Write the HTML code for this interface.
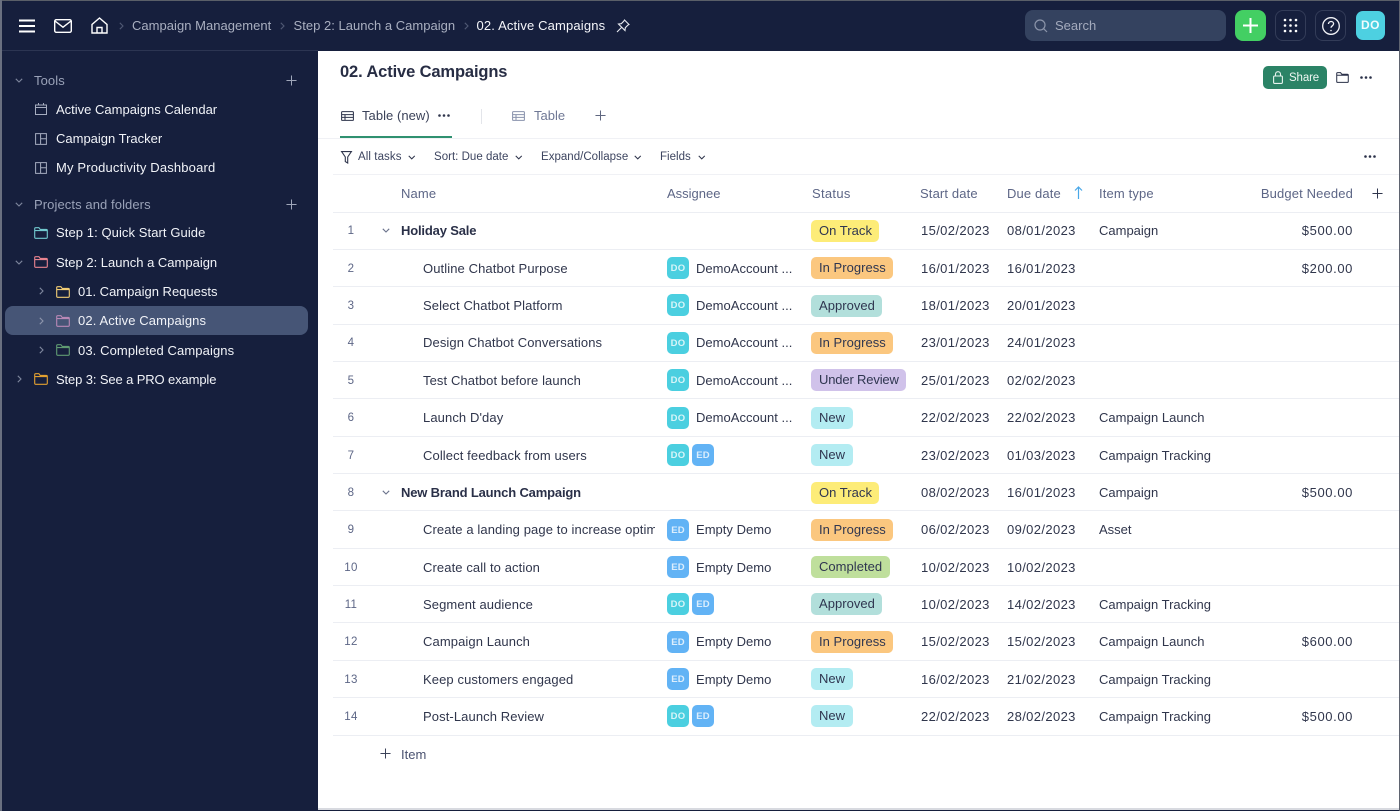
<!DOCTYPE html>
<html lang="en">
<head>
<meta charset="utf-8">
<title>02. Active Campaigns</title>
<style>
html,body{margin:0;padding:0;width:1400px;height:811px;overflow:hidden;background:#161f3d}
body{font-family:"Liberation Sans",sans-serif;font-size:13px;letter-spacing:.03px;color:#2a3048;position:relative}
*{box-sizing:border-box}
.a{position:absolute;white-space:nowrap}
svg.a{overflow:visible;fill:none;stroke:currentColor;stroke-width:1.2}
#edgeT{left:0;top:0;width:1400px;height:1px;background:#5a5f68}
#edgeL{left:0;top:0;width:1.5px;height:811px;background:#6a7080}
#edgeR{left:1398.5px;top:0;width:1.5px;height:811px;background:#5f6470}
#main{left:318px;top:51px;width:1081px;height:757px;background:#fff}
#edgeB{left:318px;top:808px;width:1081px;height:2px;background:#d8dae0}
.crumb{top:18px;color:#a9afc0;line-height:16px}
.side{color:#f1f3f8;line-height:16px;margin-top:1px;letter-spacing:0}
.sh{color:#9aa2b8;line-height:16px;margin-top:1px;letter-spacing:.09px}
.hd{color:#5d6686;line-height:16px;top:186px;letter-spacing:.14px}
.tb{color:#3d4560;font-size:11.5px;line-height:14px;top:150px;letter-spacing:.02px}
.line{left:333px;width:1066px;height:1px;background:#eceef3}
.n{left:333px;width:36px;text-align:center;color:#5d6686;font-size:11.5px;line-height:16px;margin-top:1px;letter-spacing:.3px}
.t{left:423px;line-height:16px;color:#30364c;margin-top:1px;letter-spacing:.1px}
.b{left:401px;font-weight:700;line-height:16px;color:#2a3048;margin-top:1px;letter-spacing:-.17px}
.as{left:696px;line-height:16px;color:#30364c;margin-top:1px;letter-spacing:.02px}
.d1{left:921px;line-height:16px;color:#30364c;margin-top:1px;letter-spacing:.37px}
.d2{left:1007px;line-height:16px;color:#30364c;margin-top:1px;letter-spacing:.37px}
.ty{left:1099px;line-height:16px;color:#30364c;margin-top:1px;letter-spacing:0}
.bu{right:47px;line-height:16px;color:#30364c;margin-top:1px;letter-spacing:.6px}
.st{left:811px;height:22px;line-height:22px;padding:0 7.5px 0 8px;border-radius:5px;color:#2f3650;letter-spacing:.03px}
.ot{background:#fdec78}.ip{background:#fbc77f}.ap{background:#b2dfdb}.ur{background:#d0c2ea;letter-spacing:-.16px}.nw{background:#b3ecf2}.co{background:#bfdf9c}
.av{width:22px;height:22px;border-radius:5px;color:rgba(255,255,255,.78);font-size:9.5px;font-weight:700;line-height:23px;text-align:center;letter-spacing:.2px}
.do{left:667px;background:#4bcfe0}.ed{left:667px;background:#62b3f5}.ed2{left:692px;background:#62b3f5}
</style>
</head>
<body>
<svg width="0" height="0" style="position:absolute">
<symbol id="folder" viewBox="0 0 14 12"><path d="M.7 10.300V1.700c0-.6.400-1 1-1h3.200l1.300 1.700h6.100c.6 0 1 .4 1 1v6.900c0 .6-.4 1-1 1H1.700c-.6 0-1-.4-1-1zM.7 3.600h12.600" fill="none" stroke="currentColor" stroke-width="1.100"/></symbol>
<symbol id="split" viewBox="0 0 12 12"><path d="M.6.6h10.800v10.800H.6zM5.600.6v10.800M5.600 5.800h5.800" fill="none" stroke="currentColor" stroke-width="1"/></symbol>
<symbol id="grid" viewBox="0 0 13 10"><path d="M.6 1.400c0-.5.3-.8.8-.8h10.200c.5 0 .8.3.8.8v7.200c0 .5-.3.8-.8.8H1.400c-.5 0-.8-.3-.8-.8zM.6 3.600h11.800M.6 6.400h11.800M4 3.600v5.800" fill="none" stroke="currentColor" stroke-width="1.050"/></symbol>
<symbol id="plus" viewBox="0 0 12 12"><path d="M6 .5v11M.5 6h11" fill="none" stroke="currentColor" stroke-width="1.100"/></symbol>
<symbol id="down" viewBox="0 0 8 5"><path d="M.8.8 4 4 7.200.8" fill="none" stroke="currentColor" stroke-width="1.100"/></symbol>
<symbol id="right" viewBox="0 0 5 8"><path d="M.8.8 4 4 .8 7.200" fill="none" stroke="currentColor" stroke-width="1.100"/></symbol>
<symbol id="more" viewBox="0 0 12 3"><circle cx="1.500" cy="1.500" r="1.300" fill="currentColor" stroke="none"/><circle cx="6" cy="1.500" r="1.300" fill="currentColor" stroke="none"/><circle cx="10.500" cy="1.500" r="1.300" fill="currentColor" stroke="none"/></symbol>
</svg>

<div class="a" id="main"></div>
<div class="a" id="edgeB"></div>
<div class="a" style="left:0;top:50px;width:318px;height:1px;background:#2c3552"></div>

<!-- top bar -->
<svg class="a" style="left:19px;top:19px;color:#fff;stroke-width:2" width="16" height="14"><path d="M0 1.500h16M0 7h16M0 12.500h16"/></svg>
<svg class="a" style="left:53.500px;top:18.500px;color:#fff;stroke-width:1.400" width="18" height="14"><rect x=".7" y=".7" width="16.600" height="12.600" rx="1.600"/><path d="m1 2 8 6.200L17 2"/></svg>
<svg class="a" style="left:91px;top:17px;color:#fff;stroke-width:1.400" width="17" height="17"><path d="M1 16V7.500L8.500 1 16 7.500V16zM6 16v-5.500h5V16"/></svg>
<svg class="a" style="left:119px;top:22px;color:#4f5873;width:5px;height:8px"><use href="#right"/></svg>
<div class="a crumb" style="left:132px">Campaign Management</div>
<svg class="a" style="left:280px;top:22px;color:#4f5873;width:5px;height:8px"><use href="#right"/></svg>
<div class="a crumb" style="left:293.500px;letter-spacing:.02px">Step 2: Launch a Campaign</div>
<svg class="a" style="left:464px;top:22px;color:#4f5873;width:5px;height:8px"><use href="#right"/></svg>
<div class="a crumb" style="left:476.500px;color:#f5f6fa;letter-spacing:.15px">02. Active Campaigns</div>
<svg class="a" style="left:616px;top:19px;color:#e8eaf0;stroke-width:1.100" width="14" height="14"><path d="M8.500 1 13 5.500 11.800 6.200 9.300 8.700 9 11.500 2.500 5 5.300 4.700 7.800 2.200zM5.500 8.500 1 13"/></svg>

<div class="a" style="left:1025px;top:10px;width:201px;height:31px;background:#34425f;border-radius:8px"></div>
<svg class="a" style="left:1034px;top:19px;color:#8c95aa;stroke-width:1.200" width="14" height="14"><circle cx="6" cy="6" r="5"/><path d="m9.700 9.700 3.300 3.300"/></svg>
<div class="a" style="left:1055px;top:18px;line-height:16px;color:#a4abbd;letter-spacing:0">Search</div>
<div class="a" style="left:1235px;top:10px;width:31px;height:31px;border-radius:8px;background:#43cf63"></div>
<svg class="a" style="left:1243px;top:18px;color:#fff;stroke-width:2" width="15" height="15"><path d="M7.500 0v15M0 7.500h15"/></svg>
<div class="a" style="left:1275px;top:10px;width:31px;height:31px;border-radius:8px;border:1px solid #333c58"></div>
<svg class="a" style="left:1283px;top:18px;color:#fff" width="15" height="15"><g fill="#fff" stroke="none"><circle cx="2" cy="2" r="1.300"/><circle cx="7.500" cy="2" r="1.300"/><circle cx="13" cy="2" r="1.300"/><circle cx="2" cy="7.500" r="1.300"/><circle cx="7.500" cy="7.500" r="1.300"/><circle cx="13" cy="7.500" r="1.300"/><circle cx="2" cy="13" r="1.300"/><circle cx="7.500" cy="13" r="1.300"/><circle cx="13" cy="13" r="1.300"/></g></svg>
<div class="a" style="left:1315px;top:10px;width:31px;height:31px;border-radius:8px;border:1px solid #333c58"></div>
<svg class="a" style="left:1321.500px;top:16.500px;color:#f2f3f7;stroke-width:1.300" width="18" height="18"><circle cx="9" cy="9" r="8.300"/><path d="M6.500 7c0-1.500 1.100-2.500 2.600-2.500s2.500 1 2.500 2.300c0 2-2.600 2-2.600 4"/><circle cx="9" cy="13.500" r=".8" fill="#f2f3f7" stroke="none"/></svg>
<div class="a" style="left:1356px;top:11px;width:29px;height:29px;border-radius:7px;background:#4dd0e1;color:rgba(255,255,255,.92);font-weight:700;font-size:12px;line-height:29px;text-align:center;letter-spacing:.5px">DO</div>

<!-- sidebar -->
<svg class="a" style="left:15px;top:78px;width:8px;height:5px;color:#7d859c"><use href="#down"/></svg>
<div class="a sh" style="left:34px;top:72px">Tools</div>
<svg class="a" style="left:285.500px;top:74.500px;width:11px;height:11px;color:#a0a7ba"><use href="#plus"/></svg>
<svg class="a" style="left:35px;top:103px;color:#a6adc0;stroke-width:1" width="12" height="12"><path d="M.5 2h11v9.500H.5zM.5 4.500h11M3.500 0v2M8.500 0v2"/></svg>
<div class="a side" style="left:56px;top:101px">Active Campaigns Calendar</div>
<svg class="a" style="left:34.500px;top:133px;width:12px;height:12px;color:#a6adc0"><use href="#split"/></svg>
<div class="a side" style="left:56px;top:130px">Campaign Tracker</div>
<svg class="a" style="left:34.500px;top:162px;width:12px;height:12px;color:#a6adc0"><use href="#split"/></svg>
<div class="a side" style="left:56px;top:159px;letter-spacing:.16px">My Productivity Dashboard</div>

<svg class="a" style="left:15px;top:202px;width:8px;height:5px;color:#7d859c"><use href="#down"/></svg>
<div class="a sh" style="left:34px;top:196px">Projects and folders</div>
<svg class="a" style="left:285.500px;top:198.500px;width:11px;height:11px;color:#a0a7ba"><use href="#plus"/></svg>
<svg class="a" style="left:34px;top:227px;width:14px;height:12px;color:#72c9cf"><use href="#folder"/></svg>
<div class="a side" style="left:56px;top:224px;letter-spacing:.08px">Step 1: Quick Start Guide</div>
<svg class="a" style="left:15px;top:260px;width:8px;height:5px;color:#7d859c"><use href="#down"/></svg>
<svg class="a" style="left:34px;top:256px;width:14px;height:12px;color:#e8838f"><use href="#folder"/></svg>
<div class="a side" style="left:56px;top:253.500px">Step 2: Launch a Campaign</div>
<svg class="a" style="left:39px;top:287px;width:5px;height:8px;color:#7d859c"><use href="#right"/></svg>
<svg class="a" style="left:56px;top:285.500px;width:14px;height:12px;color:#f2cd74"><use href="#folder"/></svg>
<div class="a side" style="left:78px;top:283px">01. Campaign Requests</div>
<div class="a" style="left:4.500px;top:306px;width:303.500px;height:29px;border-radius:8px;background:#465576"></div>
<svg class="a" style="left:39px;top:316.500px;width:5px;height:8px;color:#8d95ab"><use href="#right"/></svg>
<svg class="a" style="left:56px;top:315px;width:14px;height:12px;color:#b888b6"><use href="#folder"/></svg>
<div class="a side" style="left:78px;top:312px;letter-spacing:.12px">02. Active Campaigns</div>
<svg class="a" style="left:39px;top:346px;width:5px;height:8px;color:#7d859c"><use href="#right"/></svg>
<svg class="a" style="left:56px;top:344px;width:14px;height:12px;color:#5f9a72"><use href="#folder"/></svg>
<div class="a side" style="left:78px;top:342px;letter-spacing:.1px">03. Completed Campaigns</div>
<svg class="a" style="left:17px;top:375px;width:5px;height:8px;color:#7d859c"><use href="#right"/></svg>
<svg class="a" style="left:34px;top:373px;width:14px;height:12px;color:#e2a030"><use href="#folder"/></svg>
<div class="a side" style="left:56px;top:371px;letter-spacing:-.12px">Step 3: See a PRO example</div>

<!-- page header -->
<div class="a" style="left:340px;top:61px;font-size:16.500px;font-weight:700;line-height:22px;color:#272d44;letter-spacing:-.13px">02. Active Campaigns</div>
<div class="a" style="left:1263px;top:66px;width:64px;height:23px;border-radius:5px;background:#2b8366"></div>
<svg class="a" style="left:1273px;top:71px;color:#e6f3ee;stroke-width:1.100" width="10" height="13"><rect x=".6" y="5" width="8.800" height="7.400" rx="1"/><path d="M2.500 5V3.200a2.500 2.500 0 0 1 5 0V5"/></svg>
<div class="a" style="left:1289px;top:70.500px;font-size:11.500px;line-height:15px;color:#eef7f3;letter-spacing:-.12px">Share</div>
<svg class="a" style="left:1336px;top:72px;width:13px;height:11px;color:#2a3048"><use href="#folder"/></svg>
<svg class="a" style="left:1360px;top:76px;width:12px;height:3px;color:#2a3048"><use href="#more"/></svg>

<!-- tabs -->
<svg class="a" style="left:341px;top:111px;width:13px;height:10px;color:#2f354c"><use href="#grid"/></svg>
<div class="a" style="left:362px;top:108px;line-height:16px;color:#3b4259;letter-spacing:.05px">Table (new)</div>
<svg class="a" style="left:438px;top:114px;width:12px;height:3px;color:#2f354c"><use href="#more"/></svg>
<div class="a" style="left:481px;top:109px;width:1px;height:15px;background:#e3e5ea"></div>
<svg class="a" style="left:512px;top:111px;width:13px;height:10px;color:#8a93ad"><use href="#grid"/></svg>
<div class="a" style="left:534px;top:108px;line-height:16px;color:#6f7895;letter-spacing:0">Table</div>
<svg class="a" style="left:595px;top:110px;width:11px;height:11px;color:#5f6780"><use href="#plus"/></svg>
<div class="a" style="left:340px;top:136px;width:112px;height:2px;background:#2f9170"></div>
<div class="a" style="left:318px;top:138px;width:1081px;height:1px;background:#f0f1f5"></div>

<!-- toolbar -->
<svg class="a" style="left:341px;top:150.500px;color:#2f354c;stroke-width:1.100" width="11" height="13"><path d="M.6.6h9.800L6.700 6v6L4.300 10.600V6z"/></svg>
<div class="a tb" style="left:358px;letter-spacing:.08px">All tasks</div>
<svg class="a" style="left:408px;top:154.500px;width:7.500px;height:5px;color:#2f354c"><use href="#down"/></svg>
<div class="a tb" style="left:434px">Sort: Due date</div>
<svg class="a" style="left:515px;top:154.500px;width:7.500px;height:5px;color:#2f354c"><use href="#down"/></svg>
<div class="a tb" style="left:541px">Expand/Collapse</div>
<svg class="a" style="left:634px;top:154.500px;width:7.500px;height:5px;color:#2f354c"><use href="#down"/></svg>
<div class="a tb" style="left:660px">Fields</div>
<svg class="a" style="left:697.500px;top:154.500px;width:7.500px;height:5px;color:#2f354c"><use href="#down"/></svg>
<svg class="a" style="left:1364px;top:155px;width:12px;height:3px;color:#2a3048"><use href="#more"/></svg>
<div class="a" style="left:333px;top:174px;width:1066px;height:1px;background:#f0f1f5"></div>

<!-- table header -->
<div class="a hd" style="left:401px">Name</div>
<div class="a hd" style="left:667px;letter-spacing:0">Assignee</div>
<div class="a hd" style="left:812px;letter-spacing:.3px">Status</div>
<div class="a hd" style="left:920px">Start date</div>
<div class="a hd" style="left:1007px">Due date</div>
<svg class="a" style="left:1074px;top:186px;color:#4aa8e8;stroke-width:1.200" width="9" height="13"><path d="M4.500 13V1M1 4.500 4.500 1 8 4.500"/></svg>
<div class="a hd" style="left:1099px">Item type</div>
<div class="a hd" style="right:47px">Budget Needed</div>
<svg class="a" style="left:1372px;top:188px;width:11px;height:11px;color:#2f354c"><use href="#plus"/></svg>

<!-- row separators -->
<div class="a line" style="top:212px"></div>
<div class="a line" style="top:249px"></div>
<div class="a line" style="top:286px"></div>
<div class="a line" style="top:324px"></div>
<div class="a line" style="top:361px"></div>
<div class="a line" style="top:398px"></div>
<div class="a line" style="top:436px"></div>
<div class="a line" style="top:473px"></div>
<div class="a line" style="top:510px"></div>
<div class="a line" style="top:548px"></div>
<div class="a line" style="top:585px"></div>
<div class="a line" style="top:622px"></div>
<div class="a line" style="top:660px"></div>
<div class="a line" style="top:697px"></div>
<div class="a line" style="top:735px"></div>

<!-- rows -->
<div class="a n" style="top:222px">1</div>
<svg class="a" style="left:382px;top:228px;width:8px;height:5px;color:#6b738c"><use href="#down"/></svg>
<div class="a b" style="top:222px">Holiday Sale</div>
<div class="a st ot" style="top:219.500px">On Track</div>
<div class="a d1" style="top:222px">15/02/2023</div><div class="a d2" style="top:222px">08/01/2023</div>
<div class="a ty" style="top:222px">Campaign</div><div class="a bu" style="top:222px">$500.00</div>

<div class="a n" style="top:259.500px">2</div>
<div class="a t" style="top:259.500px">Outline Chatbot Purpose</div>
<div class="a av do" style="top:257px">DO</div><div class="a as" style="top:259.500px">DemoAccount ...</div>
<div class="a st ip" style="top:257px">In Progress</div>
<div class="a d1" style="top:259.500px">16/01/2023</div><div class="a d2" style="top:259.500px">16/01/2023</div>
<div class="a bu" style="top:259.500px">$200.00</div>

<div class="a n" style="top:297px">3</div>
<div class="a t" style="top:297px">Select Chatbot Platform</div>
<div class="a av do" style="top:294px">DO</div><div class="a as" style="top:297px">DemoAccount ...</div>
<div class="a st ap" style="top:294.500px">Approved</div>
<div class="a d1" style="top:297px">18/01/2023</div><div class="a d2" style="top:297px">20/01/2023</div>

<div class="a n" style="top:334px">4</div>
<div class="a t" style="top:334px">Design Chatbot Conversations</div>
<div class="a av do" style="top:331.500px">DO</div><div class="a as" style="top:334px">DemoAccount ...</div>
<div class="a st ip" style="top:331.500px">In Progress</div>
<div class="a d1" style="top:334px">23/01/2023</div><div class="a d2" style="top:334px">24/01/2023</div>

<div class="a n" style="top:372px">5</div>
<div class="a t" style="top:372px">Test Chatbot before launch</div>
<div class="a av do" style="top:369px">DO</div><div class="a as" style="top:372px">DemoAccount ...</div>
<div class="a st ur" style="top:369px">Under Review</div>
<div class="a d1" style="top:372px">25/01/2023</div><div class="a d2" style="top:372px">02/02/2023</div>

<div class="a n" style="top:409px">6</div>
<div class="a t" style="top:409px">Launch D'day</div>
<div class="a av do" style="top:406.500px">DO</div><div class="a as" style="top:409px">DemoAccount ...</div>
<div class="a st nw" style="top:406.500px">New</div>
<div class="a d1" style="top:409px">22/02/2023</div><div class="a d2" style="top:409px">22/02/2023</div>
<div class="a ty" style="top:409px">Campaign Launch</div>

<div class="a n" style="top:447px">7</div>
<div class="a t" style="top:447px">Collect feedback from users</div>
<div class="a av do" style="top:444px">DO</div><div class="a av ed2" style="top:444px">ED</div>
<div class="a st nw" style="top:444px">New</div>
<div class="a d1" style="top:447px">23/02/2023</div><div class="a d2" style="top:447px">01/03/2023</div>
<div class="a ty" style="top:447px">Campaign Tracking</div>

<div class="a n" style="top:484px">8</div>
<svg class="a" style="left:382px;top:490px;width:8px;height:5px;color:#6b738c"><use href="#down"/></svg>
<div class="a b" style="top:484px">New Brand Launch Campaign</div>
<div class="a st ot" style="top:481.500px">On Track</div>
<div class="a d1" style="top:484px">08/02/2023</div><div class="a d2" style="top:484px">16/01/2023</div>
<div class="a ty" style="top:484px">Campaign</div><div class="a bu" style="top:484px">$500.00</div>

<div class="a n" style="top:521px">9</div>
<div class="a t" style="top:521px;width:232px;overflow:hidden">Create a landing page to increase optimization</div>
<div class="a av ed" style="top:518.500px">ED</div><div class="a as" style="top:521px">Empty Demo</div>
<div class="a st ip" style="top:518.500px">In Progress</div>
<div class="a d1" style="top:521px">06/02/2023</div><div class="a d2" style="top:521px">09/02/2023</div>
<div class="a ty" style="top:521px">Asset</div>

<div class="a n" style="top:559px">10</div>
<div class="a t" style="top:559px">Create call to action</div>
<div class="a av ed" style="top:556px">ED</div><div class="a as" style="top:559px">Empty Demo</div>
<div class="a st co" style="top:556px">Completed</div>
<div class="a d1" style="top:559px">10/02/2023</div><div class="a d2" style="top:559px">10/02/2023</div>

<div class="a n" style="top:596px">11</div>
<div class="a t" style="top:596px">Segment audience</div>
<div class="a av do" style="top:593px">DO</div><div class="a av ed2" style="top:593px">ED</div>
<div class="a st ap" style="top:593px">Approved</div>
<div class="a d1" style="top:596px">10/02/2023</div><div class="a d2" style="top:596px">14/02/2023</div>
<div class="a ty" style="top:596px">Campaign Tracking</div>

<div class="a n" style="top:633px">12</div>
<div class="a t" style="top:633px">Campaign Launch</div>
<div class="a av ed" style="top:630.500px">ED</div><div class="a as" style="top:633px">Empty Demo</div>
<div class="a st ip" style="top:630.500px">In Progress</div>
<div class="a d1" style="top:633px">15/02/2023</div><div class="a d2" style="top:633px">15/02/2023</div>
<div class="a ty" style="top:633px">Campaign Launch</div><div class="a bu" style="top:633px">$600.00</div>

<div class="a n" style="top:671px">13</div>
<div class="a t" style="top:671px">Keep customers engaged</div>
<div class="a av ed" style="top:668px">ED</div><div class="a as" style="top:671px">Empty Demo</div>
<div class="a st nw" style="top:668px">New</div>
<div class="a d1" style="top:671px">16/02/2023</div><div class="a d2" style="top:671px">21/02/2023</div>
<div class="a ty" style="top:671px">Campaign Tracking</div>

<div class="a n" style="top:708px">14</div>
<div class="a t" style="top:708px">Post-Launch Review</div>
<div class="a av do" style="top:705px">DO</div><div class="a av ed2" style="top:705px">ED</div>
<div class="a st nw" style="top:705px">New</div>
<div class="a d1" style="top:708px">22/02/2023</div><div class="a d2" style="top:708px">28/02/2023</div>
<div class="a ty" style="top:708px">Campaign Tracking</div><div class="a bu" style="top:708px">$500.00</div>

<svg class="a" style="left:380px;top:748px;width:11px;height:11px;color:#3b4259"><use href="#plus"/></svg>
<div class="a" style="left:401px;top:746.500px;line-height:16px;color:#4a5270">Item</div>

<div class="a" id="edgeT"></div>
<div class="a" id="edgeL"></div>
<div class="a" id="edgeR"></div>
</body>
</html>
